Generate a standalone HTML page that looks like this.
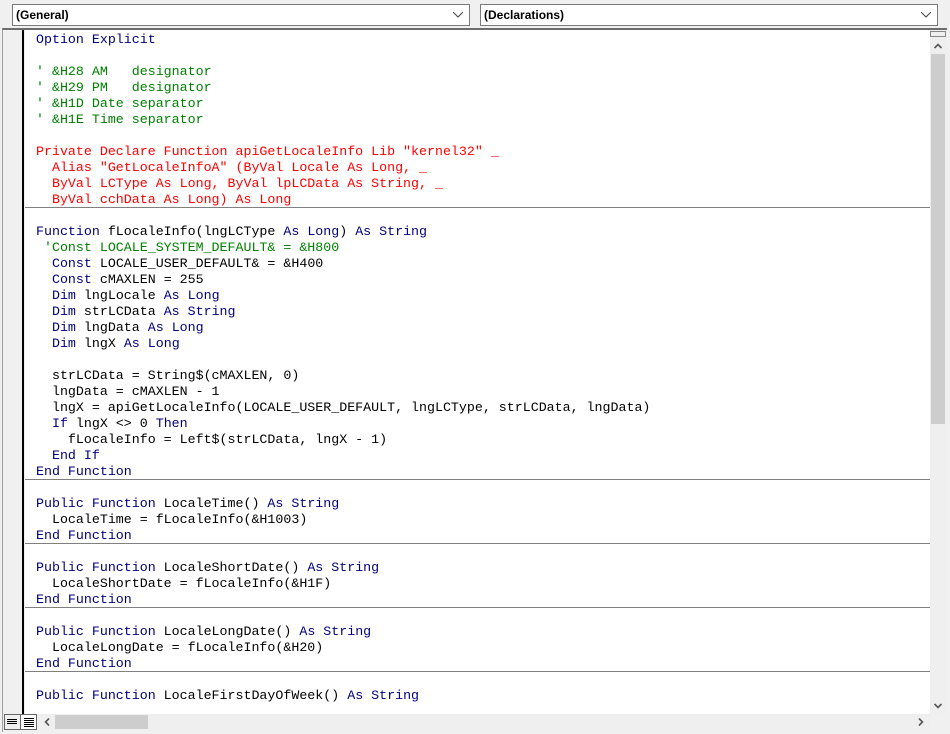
<!DOCTYPE html>
<html><head><style>
*{margin:0;padding:0;box-sizing:border-box}
body{width:950px;height:734px;background:#f0f0f0;position:relative;overflow:hidden;font-family:"Liberation Sans",sans-serif}
.dd{position:absolute;top:4px;height:22px;background:#fff;border:1px solid #7a7a7a;font-size:12px;font-weight:bold;padding:3px 0 0 3px;color:#000}
.dd svg{position:absolute;right:6px;top:7px}
#pane{position:absolute;left:2px;top:28px;width:945px;height:704px;border-top:2px solid #6d6d6d;border-left:1px solid #a0a0a0}
#margin{position:absolute;left:3px;top:30px;width:21px;height:684px;background:#f0f0f0;border-right:2px solid #000}
#code{position:absolute;left:25px;top:30px;width:905px;height:684px;background:#fff;overflow:hidden}
.l{position:absolute;left:11px;height:16px;line-height:16px;font-family:"Liberation Mono",monospace;font-size:13.3px;white-space:pre;color:#000}
.k{color:#00007f}.c{color:#008000}.r{color:#f00}
.sep{position:absolute;left:0;width:905px;height:1px;background:#808080}
#vs{position:absolute;left:930px;top:30px;width:16px;height:684px;background:#efefef}
#hs{position:absolute;left:40px;top:714px;width:890px;height:16px;background:#efefef}
</style></head><body>
<div class="dd" style="left:12px;width:458px">(General)<svg width="10" height="6"><path d="M0 0L5 5L10 0" stroke="#444" fill="none"/></svg></div>
<div class="dd" style="left:480px;width:458px">(Declarations)<svg width="10" height="6"><path d="M0 0L5 5L10 0" stroke="#444" fill="none"/></svg></div>
<div id="pane"></div>
<div id="margin"></div>
<div id="code">
<div class="l k" style="top:2px">Option Explicit</div>
<div class="l c" style="top:34px">' &amp;H28 AM   designator</div>
<div class="l c" style="top:50px">' &amp;H29 PM   designator</div>
<div class="l c" style="top:66px">' &amp;H1D Date separator</div>
<div class="l c" style="top:82px">' &amp;H1E Time separator</div>
<div class="l r" style="top:114px">Private Declare Function apiGetLocaleInfo Lib "kernel32" _</div>
<div class="l r" style="top:130px">  Alias "GetLocaleInfoA" (ByVal Locale As Long, _</div>
<div class="l r" style="top:146px">  ByVal LCType As Long, ByVal lpLCData As String, _</div>
<div class="l r" style="top:162px">  ByVal cchData As Long) As Long</div>
<div class="sep" style="top:177px"></div>
<div class="l" style="top:194px"><span class="k">Function</span> fLocaleInfo(lngLCType <span class="k">As Long</span>) <span class="k">As String</span></div>
<div class="l c" style="top:210px"> 'Const LOCALE_SYSTEM_DEFAULT&amp; = &amp;H800</div>
<div class="l" style="top:226px">  <span class="k">Const</span> LOCALE_USER_DEFAULT&amp; = &amp;H400</div>
<div class="l" style="top:242px">  <span class="k">Const</span> cMAXLEN = 255</div>
<div class="l" style="top:258px">  <span class="k">Dim</span> lngLocale <span class="k">As Long</span></div>
<div class="l" style="top:274px">  <span class="k">Dim</span> strLCData <span class="k">As String</span></div>
<div class="l" style="top:290px">  <span class="k">Dim</span> lngData <span class="k">As Long</span></div>
<div class="l" style="top:306px">  <span class="k">Dim</span> lngX <span class="k">As Long</span></div>
<div class="l" style="top:338px">  strLCData = String$(cMAXLEN, 0)</div>
<div class="l" style="top:354px">  lngData = cMAXLEN - 1</div>
<div class="l" style="top:370px">  lngX = apiGetLocaleInfo(LOCALE_USER_DEFAULT, lngLCType, strLCData, lngData)</div>
<div class="l" style="top:386px">  <span class="k">If</span> lngX &lt;&gt; 0 <span class="k">Then</span></div>
<div class="l" style="top:402px">    fLocaleInfo = Left$(strLCData, lngX - 1)</div>
<div class="l k" style="top:418px">  End If</div>
<div class="l k" style="top:434px">End Function</div>
<div class="sep" style="top:449px"></div>
<div class="l" style="top:466px"><span class="k">Public Function</span> LocaleTime() <span class="k">As String</span></div>
<div class="l" style="top:482px">  LocaleTime = fLocaleInfo(&amp;H1003)</div>
<div class="l k" style="top:498px">End Function</div>
<div class="sep" style="top:513px"></div>
<div class="l" style="top:530px"><span class="k">Public Function</span> LocaleShortDate() <span class="k">As String</span></div>
<div class="l" style="top:546px">  LocaleShortDate = fLocaleInfo(&amp;H1F)</div>
<div class="l k" style="top:562px">End Function</div>
<div class="sep" style="top:577px"></div>
<div class="l" style="top:594px"><span class="k">Public Function</span> LocaleLongDate() <span class="k">As String</span></div>
<div class="l" style="top:610px">  LocaleLongDate = fLocaleInfo(&amp;H20)</div>
<div class="l k" style="top:626px">End Function</div>
<div class="sep" style="top:641px"></div>
<div class="l" style="top:658px"><span class="k">Public Function</span> LocaleFirstDayOfWeek() <span class="k">As String</span></div>
</div>
<div id="vs">
<div style="position:absolute;left:0;top:1px;width:16px;height:6px;border:1px solid #888;background:#f0f0f0"></div>
<svg style="position:absolute;left:4px;top:13px" width="8" height="6"><path d="M0.5 5L4 1.5L7.5 5" stroke="#555" stroke-width="1.6" fill="none"/></svg>
<div style="position:absolute;left:1px;top:24px;width:14px;height:370px;background:#cdcdcd"></div>
<svg style="position:absolute;left:4px;top:673px" width="8" height="6"><path d="M0.5 1L4 4.5L7.5 1" stroke="#555" stroke-width="1.6" fill="none"/></svg>
</div>
<div id="hs">
<svg style="position:absolute;left:4px;top:4px" width="6" height="8"><path d="M5 0.5L1.5 4L5 7.5" stroke="#555" stroke-width="1.6" fill="none"/></svg>
<div style="position:absolute;left:15px;top:1px;width:93px;height:14px;background:#cdcdcd"></div>
<svg style="position:absolute;left:878px;top:4px" width="6" height="8"><path d="M1 0.5L4.5 4L1 7.5" stroke="#555" stroke-width="1.6" fill="none"/></svg>
</div>
<div style="position:absolute;left:4px;top:714px;width:16px;height:16px;border:1px solid #666;border-right:none;background:#f0f0f0"><div style="margin:4px 2px;width:10px;height:1px;background:#000;box-shadow:0 2px #000,0 4px #000"></div></div>
<div style="position:absolute;left:20px;top:714px;width:17px;height:16px;border:1px solid #666;background:#fff"><div style="margin:3px 3px;width:10px;height:1px;background:#000;box-shadow:0 2px #000,0 4px #000,0 6px #000,0 8px #000"></div></div>
</body></html>
